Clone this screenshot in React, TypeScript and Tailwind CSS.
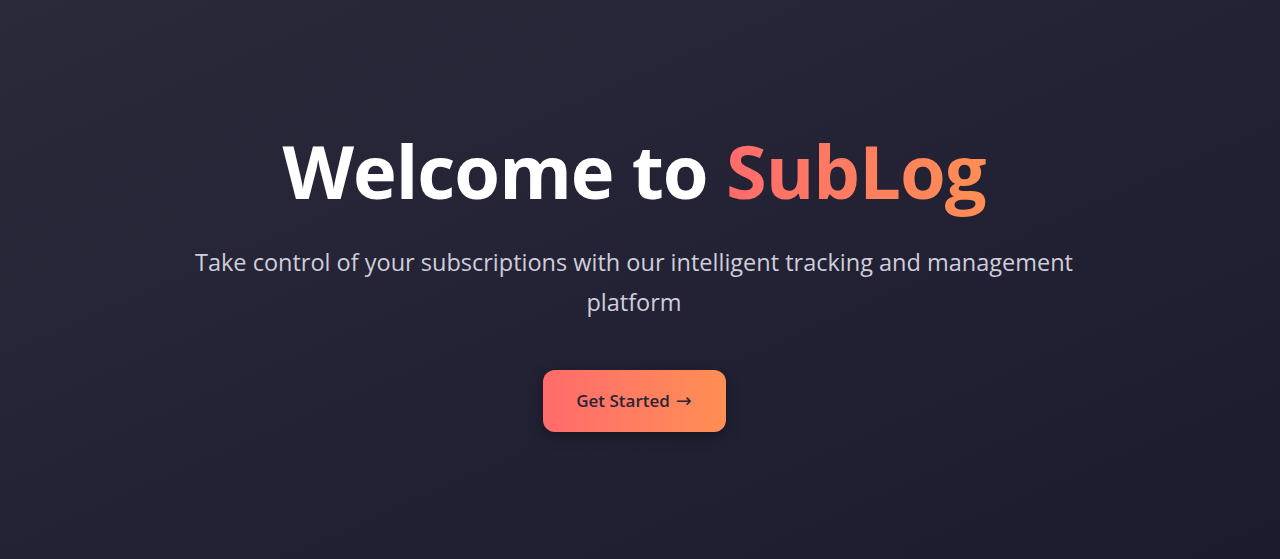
export default function App() {
  return (
    <div
      className="min-h-screen w-full flex items-center justify-center bg-gradient-to-br from-[#2b2a3b] to-[#1c1b2e] pl-6 pr-[36px]"
      style={{ fontFamily: '"Open Sans", "Noto Sans", sans-serif' }}
    >
      <div className="flex flex-col items-center text-center">
        <h1 className="text-[74px] font-bold leading-[1.2] tracking-[-1px] text-white">
          Welcome to{' '}
          <span className="bg-gradient-to-r from-[#ff6b6b] to-[#ff8e53] bg-clip-text text-transparent">
            SubLog
          </span>
        </h1>
        <p className="mt-[26px] max-w-[920px] text-[23.5px] leading-[40px] text-[#cfcedb]">
          Take control of your subscriptions with our intelligent tracking and management platform
        </p>
        <button className="mt-[48px] flex h-[62px] w-[183px] items-center justify-center gap-[6px] rounded-xl bg-gradient-to-r from-[#ff6b6b] to-[#ff8e53] text-[17px] font-semibold text-[#2a2438] shadow-[0_4px_14px_rgba(0,0,0,0.35)]">
          Get Started
          <span style={{ fontFamily: '"DejaVu Sans", sans-serif' }} className="text-[19px] font-normal leading-none">→</span>
        </button>
      </div>
    </div>
  );
}
